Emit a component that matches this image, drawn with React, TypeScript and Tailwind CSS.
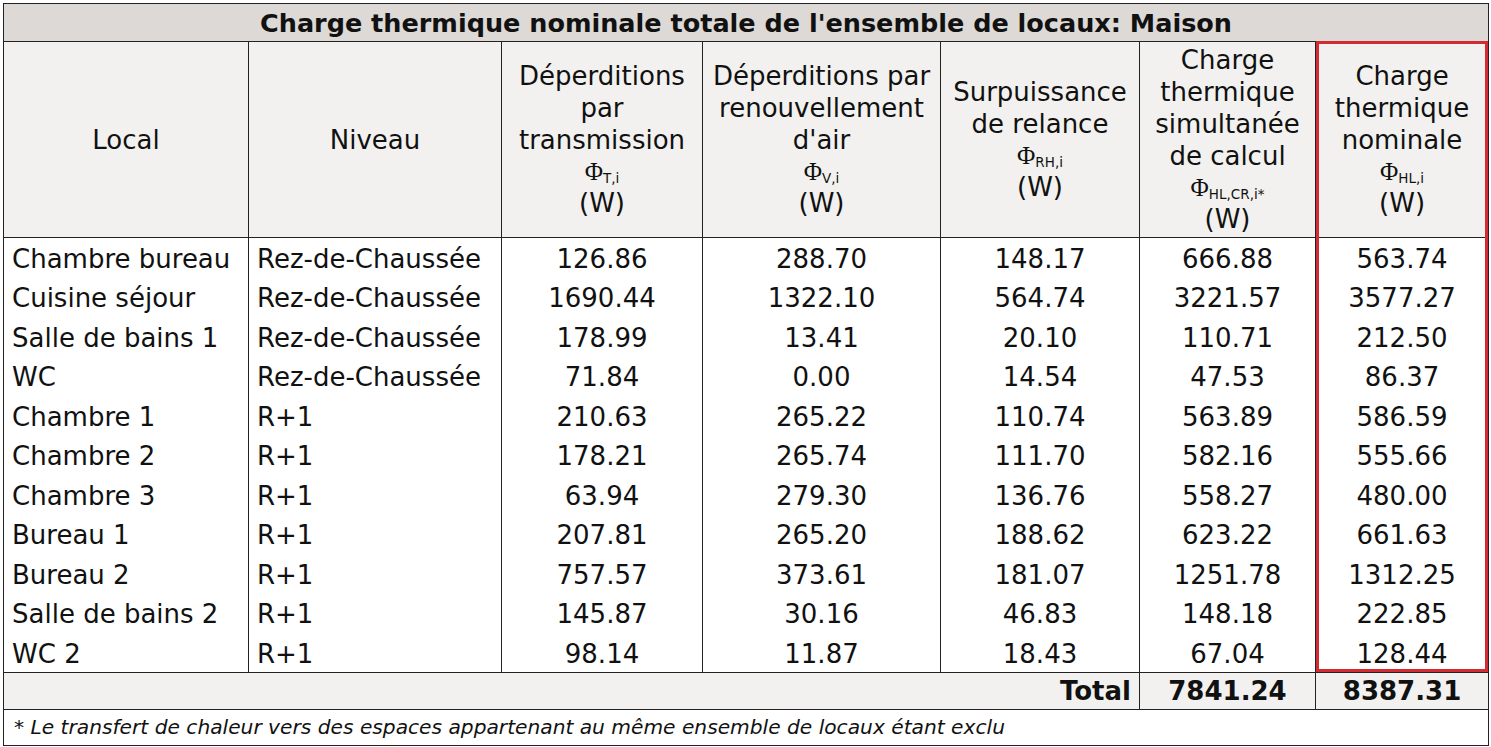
const rows = [
  ["Chambre bureau", "Rez-de-Chaussée", "126.86", "288.70", "148.17", "666.88", "563.74"],
  ["Cuisine séjour", "Rez-de-Chaussée", "1690.44", "1322.10", "564.74", "3221.57", "3577.27"],
  ["Salle de bains 1", "Rez-de-Chaussée", "178.99", "13.41", "20.10", "110.71", "212.50"],
  ["WC", "Rez-de-Chaussée", "71.84", "0.00", "14.54", "47.53", "86.37"],
  ["Chambre 1", "R+1", "210.63", "265.22", "110.74", "563.89", "586.59"],
  ["Chambre 2", "R+1", "178.21", "265.74", "111.70", "582.16", "555.66"],
  ["Chambre 3", "R+1", "63.94", "279.30", "136.76", "558.27", "480.00"],
  ["Bureau 1", "R+1", "207.81", "265.20", "188.62", "623.22", "661.63"],
  ["Bureau 2", "R+1", "757.57", "373.61", "181.07", "1251.78", "1312.25"],
  ["Salle de bains 2", "R+1", "145.87", "30.16", "46.83", "148.18", "222.85"],
  ["WC 2", "R+1", "98.14", "11.87", "18.43", "67.04", "128.44"],
];

// Φ with a small sans subscript, as in the reference header
function Phi({ sub }: { sub: string }) {
  return (
    <div className="h-[31px] leading-[31px] overflow-visible">
      <span className="text-[25px] leading-none" style={{ fontFamily: '"Liberation Serif", serif' }}>Φ</span>
      <span className="text-[13.5px] leading-none align-[-3px]">{sub}</span>
    </div>
  );
}

export default function App() {
  return (
    <div className="bg-white min-h-screen p-[3px] text-[#111]" style={{ fontFamily: '"DejaVu Sans", Verdana, sans-serif' }}>
      <div className="relative w-[1485px]">
        <table className="w-full table-fixed border-collapse text-[26px]">
          <colgroup>
            <col className="w-[245px]" />
            <col className="w-[253px]" />
            <col className="w-[201px]" />
            <col className="w-[238px]" />
            <col className="w-[199px]" />
            <col className="w-[176px]" />
            <col className="w-[173px]" />
          </colgroup>
          <thead>
            <tr className="h-[38px] bg-[#dcd9d6]">
              <th colSpan={7} className="border border-[#222] p-0 font-bold text-[25.5px] leading-[36px] text-center whitespace-nowrap">
                Charge thermique nominale totale de l'ensemble de locaux: Maison
              </th>
            </tr>
            <tr className="h-[196px] bg-[#f2f1ef] leading-[32px]">
              <th className="border border-[#222] p-0 font-normal">Local</th>
              <th className="border border-[#222] p-0 font-normal">Niveau</th>
              <th className="border border-[#222] p-0 font-normal">
                Déperditions par transmission
                <Phi sub="T,i" />
                (W)
              </th>
              <th className="border border-[#222] p-0 font-normal">
                Déperditions par renouvellement d'air
                <Phi sub="V,i" />
                (W)
              </th>
              <th className="border border-[#222] p-0 font-normal">
                Surpuissance de relance
                <Phi sub="RH,i" />
                (W)
              </th>
              <th className="border border-[#222] p-0 font-normal">
                Charge thermique simultanée de calcul
                <Phi sub="HL,CR,i*" />
                (W)
              </th>
              <th className="border border-[#222] p-0 font-normal">
                Charge thermique nominale
                <Phi sub="HL,i" />
                (W)
              </th>
            </tr>
          </thead>
          <tbody>
            {rows.map((r, i) => (
              <tr key={i} className="h-[39.5px] leading-[30px]">
                <td className="border-x border-[#222] p-0 pt-[3px] pl-[8px] whitespace-nowrap">{r[0]}</td>
                <td className="border-x border-[#222] p-0 pt-[3px] pl-[8px] whitespace-nowrap">{r[1]}</td>
                {r.slice(2).map((v, j) => (
                  <td key={j} className="border-x border-[#222] p-0 pt-[3px] text-center">{v}</td>
                ))}
              </tr>
            ))}
            <tr className="h-[37px] bg-[#f2f1ef] font-bold leading-[30px]">
              <td colSpan={5} className="border border-[#222] p-0 text-right pr-[8px]">Total</td>
              <td className="border border-[#222] p-0 text-center">7841.24</td>
              <td className="border border-[#222] p-0 text-center">8387.31</td>
            </tr>
            <tr className="h-[36px] leading-[28px]">
              <td colSpan={7} className="border border-[#222] p-0 pl-[10px] italic text-[20.2px] whitespace-nowrap">
                * Le transfert de chaleur vers des espaces appartenant au même ensemble de locaux étant exclu
              </td>
            </tr>
          </tbody>
        </table>
        <div className="absolute left-[1313px] top-[38px] w-[172px] h-[631px] border-[3px] border-[#d42a32] pointer-events-none" />
      </div>
    </div>
  );
}
